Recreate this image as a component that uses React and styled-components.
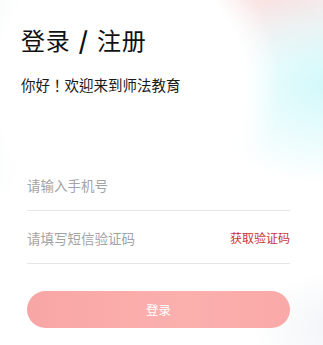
import styled, { createGlobalStyle } from "styled-components";

const Global = createGlobalStyle`
  html, body {
    margin: 0;
    padding: 0;
    background: #fff;
  }
  body {
    font-family: "Noto Sans CJK SC", "Noto Sans", sans-serif;
  }
`;

const Page = styled.div`
  width: 323px;
  height: 345px;
  overflow: hidden;
  box-sizing: border-box;
  padding: 22px 0 0;
  background:
    radial-gradient(circle at 120px 85px, #ffffff 0, #ffffff 125px, rgba(255,255,255,0) 160px),
    radial-gradient(ellipse 125px 100px at 325px 85px, rgba(205, 248, 250, 0.9), rgba(205, 248, 250, 0) 100%),
    radial-gradient(ellipse 170px 80px at 270px -10px, rgba(250, 218, 218, 0.9), rgba(250, 218, 218, 0) 100%),
    radial-gradient(ellipse 60px 120px at -10px 80px, rgba(228, 236, 236, 0.8), rgba(228, 236, 236, 0) 100%),
    radial-gradient(ellipse 90px 60px at 340px 330px, rgba(240, 242, 246, 0.9), rgba(240, 242, 246, 0) 100%),
    #ffffff;
`;

const Header = styled.div`
  padding: 0 21px;
`;

const Title = styled.h1`
  margin: 0;
  font-size: 24px;
  font-weight: 400;
  line-height: 36px;
  color: #111;
  letter-spacing: 0.8px;
`;

const Slash = styled.span`
  font-weight: 700;
  margin: 0 2px;
`;

const Welcome = styled.p`
  margin: 17px 0 0;
  font-family: "Noto Sans CJK TC", "Noto Sans CJK SC", sans-serif;
  font-size: 14.5px;
  line-height: 20px;
  color: #1a1a1a;
`;

const Form = styled.div`
  display: flex;
  flex-direction: column;
  padding: 0 33px 0 27px;
  margin-top: 63px;
`;

const Field = styled.div`
  display: flex;
  align-items: center;
  justify-content: space-between;
  height: 52px;
  border-bottom: 1px solid #e6e6e6;
`;

const Placeholder = styled.span`
  font-size: 13.5px;
  color: #a3a3a3;
  padding-top: 1px;
`;

const CodeLink = styled.span`
  font-size: 12px;
  color: #c8343a;
`;

const Button = styled.div`
  margin: 27px 33px 0 27px;
  height: 37px;
  border-radius: 19px;
  background: linear-gradient(90deg, #f8a6a5, #fbb0ae 60%, #f9a9a8);
  display: flex;
  align-items: center;
  justify-content: center;
  color: #fff;
  font-size: 12.5px;
`;

export default function App() {
  return (
    <>
      <Global />
      <Page>
        <Header>
          <Title>
            登录 <Slash>/</Slash> 注册
          </Title>
          <Welcome>你好！欢迎来到师法教育</Welcome>
        </Header>
        <Form>
          <Field>
            <Placeholder>请输入手机号</Placeholder>
          </Field>
          <Field>
            <Placeholder>请填写短信验证码</Placeholder>
            <CodeLink>获取验证码</CodeLink>
          </Field>
        </Form>
        <Button>登录</Button>
      </Page>
    </>
  );
}
